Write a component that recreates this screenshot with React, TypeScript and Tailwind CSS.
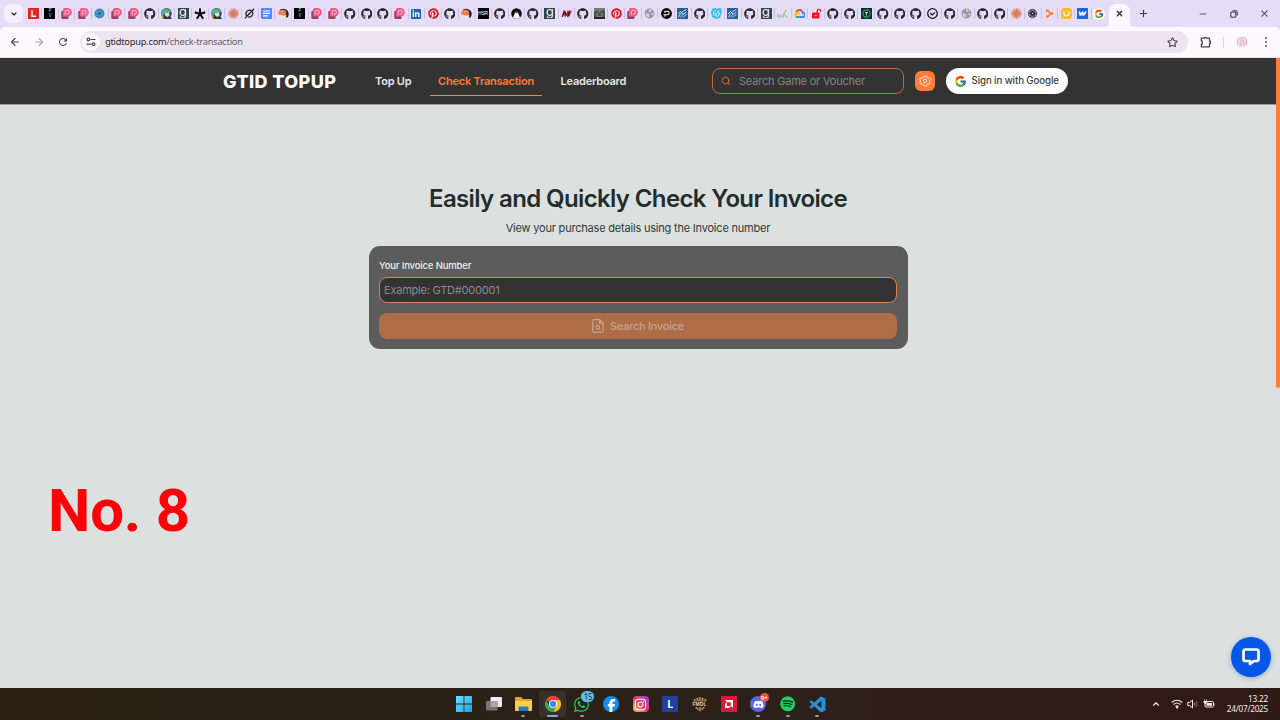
import type { ReactNode } from "react";
import { ChevronDown, ChevronUp, Search, Star, X, Plus, Minus, ArrowLeft, ArrowRight } from "lucide-react";
import {
  FaGithub,
  FaPinterest,
  FaLinkedinIn,
  FaGoodreadsG,
  FaFacebookF,
  FaInstagram,
  FaDiscord,
  FaSpotify,
  FaWhatsapp,
} from "react-icons/fa6";
import { FcGoogle } from "react-icons/fc";
import { BiLogoVisualStudio } from "react-icons/bi";
import { MdRefresh } from "react-icons/md";

function GithubMark() {
  return <FaGithub className="size-[11.500px] text-[#24242c]" />;
}

function PinkP() {
  return (
    <svg viewBox="0 0 11 11" className="size-[11px]">
      <path d="M.3 3.500 3 2v5l5 1.500L7 11H1.300Q.3 11 .3 10Z" fill="#96405f" />
      <path d="M2 1.500Q2 0 3.500 0H6.500a4.300 4.300 0 0 1 0 8.600H2Z" fill="#ee5b88" />
      <path d="M4.200 7.200V4.200a2.100 2 0 1 1 2.100 2H5.800" fill="none" stroke="#fac0d3" strokeWidth="1" />
    </svg>
  );
}

function BlackPV() {
  return (
    <span className="flex size-[11px] flex-col items-center justify-center bg-black font-['Liberation_Mono',monospace] text-[4.500px] leading-[4.500px] text-[#ccc]">
      <span>P</span>
      <span>V</span>
    </span>
  );
}

function BlueKnot() {
  return (
    <svg viewBox="0 0 11 11" className="size-[11px]">
      <circle cx="5.500" cy="5.500" r="5" fill="#3d8cc0" />
      <path d="M2 3.500 9 7M2.500 8l5-5" stroke="#7fbbe0" strokeWidth=".7" fill="none" />
      <circle cx="5.500" cy="5.500" r="1.300" fill="#1f5f92" />
    </svg>
  );
}

function Anime() {
  return (
    <svg viewBox="0 0 11 11" className="size-[11px]">
      <circle cx="5.500" cy="5.300" r="5.200" fill="#27494f" />
      <path d="M0 5Q2 0 6.500 .5L10 3 9 5 6 4 4 4.500 2 8Z" fill="#45b5a5" />
      <path d="M4 4.500h4l.5 3L6 9.200 3.800 7Z" fill="#f5d8c4" />
      <path d="M1 9 4 7.800l3 1.700 2.500-1L11 11H3Z" fill="#32383e" />
      <path d="m0 7 3 1-1.500 3Z" fill="#d99838" />
    </svg>
  );
}

function Goodreads() {
  return (
    <span className="flex size-[11px] items-center justify-center bg-[#34444f]">
      <FaGoodreadsG className="size-[9.500px] stroke-white text-white [stroke-width:22]" />
    </span>
  );
}

function Asterisk() {
  return (
    <svg viewBox="0 0 12 12" className="size-[12px]" stroke="#080808" strokeWidth="2">
      <path d="M6 6V.5M6 6 .8 4.300M6 6l5.200-1.700M6 6l-3.200 4.800M6 6l3.200 4.800" />
    </svg>
  );
}

function Claude() {
  return (
    <svg viewBox="0 0 12 12" className="size-[11px]" stroke="#dc7c5c" strokeWidth="1.150" strokeLinecap="round">
      <path d="M6 .7v10.600M.7 6h10.600M2.300 2.300l7.400 7.400M9.700 2.300 2.300 9.700M4 1l4 10M8 1 4 11M1 4l10 4M11 4 1 8" />
    </svg>
  );
}

function Grok() {
  return (
    <svg viewBox="0 0 12 12" className="size-[11px]" fill="none" stroke="#17151c" strokeWidth="1.250">
      <path d="M8 2.800a4 4 0 0 0-5 6M4.300 9.600a4 4 0 0 0 5-5.400M1 11.300 11 .8M4.600 7.300 9 3" />
    </svg>
  );
}

function Docs() {
  return (
    <svg viewBox="0 0 11 11" className="size-[11px]">
      <rect width="11" height="11" rx="1" fill="#4c8cf0" />
      <path d="M2 3h7M2 5.400h7M2 7.800h5" stroke="#fff" strokeWidth="1.150" />
    </svg>
  );
}

function OrangeFox() {
  return (
    <svg viewBox="0 0 11 11" className="size-[11px]">
      <path d="M2 1.500Q6-.5 9.500 2.500 12 6 9.500 9.500H5Z" fill="#262629" />
      <ellipse cx="4.300" cy="4.900" rx="3.900" ry="3.200" fill="#f27850" />
      <path d="M0 7.500q3-1.500 4.600.2L8.500 7 7.500 10H1.500Z" fill="#f7e2d8" />
      <circle cx="4" cy="3.600" r=".8" fill="#ffc3a4" />
    </svg>
  );
}

function LinkedIn() {
  return (
    <span className="flex size-[10px] items-center justify-center rounded-[1px] bg-[#1667b7]">
      <FaLinkedinIn className="size-[8px] text-white" />
    </span>
  );
}

function Pinterest() {
  return (
    <span className="flex size-[11px] rounded-full bg-white">
      <FaPinterest className="size-[11px] text-[#d5152d]" />
    </span>
  );
}

function Hsr() {
  return (
    <span className="flex size-[11px] items-center justify-center bg-black font-['Liberation_Sans',sans-serif] text-[5px] leading-none tracking-[-0.200px] text-white">
      HSR
    </span>
  );
}

function Hood() {
  return (
    <svg viewBox="0 0 11 11" className="size-[11px]">
      <circle cx="5.500" cy="5.500" r="5.300" fill="#101012" />
      <path d="M5.500 3.500Q3.500 3.500 3.500 6L2 9.500Q5.500 12 9 9.500L7.500 6Q7.500 3.500 5.500 3.500Z" fill="#f8f5fb" />
      <path d="M4 4.500q1.500-2 3 0Q5.500 6 4 4.500" fill="#48484d" />
    </svg>
  );
}

function RedN() {
  return (
    <svg viewBox="0 0 11 11" className="size-[11px]">
      <path d="M.3 9.500 3 1.500l2.200 5L7 1.500l1 3 3-2.500-3 7.500L6 6 4 9.500 3 6Z" fill="#b51224" />
      <path d="M1.500 9 3.600 3 6.500 8.500 9 2.500" fill="none" stroke="#261116" strokeWidth="1" />
    </svg>
  );
}

function Photo() {
  return (
    <svg viewBox="0 0 11 11" className="size-[11px]">
      <path d="M0 0h11v11H0Z" fill="#4c5350" />
      <path d="M0 0h11v3L8 2 5.500 5 3 2 0 4Z" fill="#777d77" />
      <path d="M2.500 5h1.500v3h3V5h1.500v4h-6Z" fill="#7d8079" />
      <path d="M0 9h11v2H0Z" fill="#242927" />
    </svg>
  );
}

function Globe() {
  return (
    <svg viewBox="0 0 11 11" className="size-[11px]">
      <circle cx="5.500" cy="5.500" r="4.900" fill="#9699a0" />
      <path d="M1.500 5.200 4 5.500l1.500 1-.5 1.200v1.800L2 8ZM5 1.200 8 2 7 3.700 5 3.800ZM8 4.500l1.800 1.500-1 1.500-1.500-.8Z" fill="#d5d1dd" />
    </svg>
  );
}

function BlackP() {
  return (
    <svg viewBox="0 0 11 11" className="size-[11px]">
      <circle cx="5.500" cy="5.500" r="5.400" fill="#070709" />
      <path d="M4 8.700V7M4 5V3.200h2.400a1.700 1.700 0 0 1 0 3.500H2.500" fill="none" stroke="#fff" strokeWidth="1.100" />
    </svg>
  );
}

function BlueWing() {
  return (
    <svg viewBox="0 0 11 11" className="size-[11px]">
      <path d="M0 0h11v11H0Z" fill="#265f9d" />
      <path d="M1.500 9.500Q3 4 9.500 1.500M3.500 9.500Q5 6 9.500 4M6 9.500Q7 7.500 9.500 6.500M1 6l3-3M4 4l2 2" stroke="#c3d9ec" strokeWidth="1" fill="none" />
    </svg>
  );
}

function CyanSwirl() {
  return (
    <svg viewBox="0 0 11 11" className="size-[11px]">
      <path d="M2 0 5.500 .5 10 0 11 4 9 10 5.500 11 1 9 0 4Z" fill="#43bae5" />
      <path d="M5 2.500Q2 3 2.500 6q1 2 3 1.500L4.500 5M7.500 2.500 6.500 5h2.200q0 3-3.200 4" stroke="#e8f8ff" strokeWidth=".9" fill="none" />
    </svg>
  );
}

function GreenLine() {
  return (
    <svg viewBox="0 0 11 11" className="size-[11px]" fill="none" stroke="#9bc886" strokeWidth="1.100">
      <path d="M.5 6v3h2V6.500M4 7v2h2.500V6.500l3-5M7 6l2.500 3h1.500" />
    </svg>
  );
}

function CloudMark() {
  return (
    <svg viewBox="0 0 12 12" className="size-[11px]" fill="none" strokeWidth="2.100">
      <path d="M2.400 4.800A3.900 3.900 0 0 1 8.600 3.200" stroke="#ea4335" />
      <path d="M8.200 2.900q1.400 1 1.400 2.500a2.200 2.200 0 0 1 0 4.400H6" stroke="#4285f4" />
      <path d="M6.200 9.800H3.500Q2.700 9.800 2 9.200" stroke="#34a853" />
      <path d="M2.300 9.400A2.300 2.300 0 0 1 3.500 5.400q1.300 0 2.200 1.200" stroke="#fbbc05" />
    </svg>
  );
}

function RedLock() {
  return (
    <svg viewBox="0 0 11 11" className="size-[11px]">
      <path d="M6.200 5V3a1.700 1.700 0 0 1 3.400 0v.7" stroke="#ef1822" strokeWidth="1.300" fill="none" />
      <rect x="1" y="4.600" width="7.500" height="6" rx=".7" fill="#f3121e" />
      <circle cx="4.800" cy="7.500" r=".8" fill="#fbe5ef" />
    </svg>
  );
}

function GreenT() {
  return (
    <svg viewBox="0 0 11 11" className="size-[11px]">
      <path d="M0 0h11v11H0Z" fill="#102c30" />
      <circle cx="5.500" cy="5.500" r="3.600" fill="none" stroke="#2cae5c" strokeWidth="1.100" />
      <path d="M4 4.500h3M5.500 4.500v3" stroke="#d5e5dd" strokeWidth=".9" />
    </svg>
  );
}

function CheckRound() {
  return (
    <svg viewBox="0 0 11 11" className="size-[11px]" fill="none" stroke="#15131a" strokeWidth="1.250">
      <circle cx="5.500" cy="5.500" r="4.800" />
      <path d="m3.200 5 2 1.900 2.800-2.500" />
    </svg>
  );
}

function OpenAi() {
  return (
    <svg viewBox="0 0 12 12" className="size-[11px]" fill="none" stroke="#25222b" strokeWidth=".8">
      <rect x="4" y="1.300" width="4.500" height="6" rx="2" />
      <rect x="4" y="1.300" width="4.500" height="6" rx="2" transform="rotate(60 6 6)" />
      <rect x="4" y="1.300" width="4.500" height="6" rx="2" transform="rotate(120 6 6)" />
      <rect x="4" y="1.300" width="4.500" height="6" rx="2" transform="rotate(180 6 6)" />
      <rect x="4" y="1.300" width="4.500" height="6" rx="2" transform="rotate(240 6 6)" />
      <rect x="4" y="1.300" width="4.500" height="6" rx="2" transform="rotate(300 6 6)" />
    </svg>
  );
}

function OrangeNodes() {
  return (
    <svg viewBox="0 0 11 11" className="size-[11px]" fill="#ff792d">
      <path d="M2 1.500h2.500l1 2 1 .8H9v2.500H6.500l-1 .7-1 2H2V7.300h2L5.300 5.500 4 3.800H2Z" />
    </svg>
  );
}

function YellowSmile() {
  return (
    <svg viewBox="0 0 11 11" className="size-[11px]">
      <rect width="11" height="11" rx="3" fill="#f8bd31" />
      <path d="M3 3.500v1.700a2.500 2.500 0 0 0 5 0V3.500" stroke="#fff8d8" strokeWidth="1.200" fill="none" />
    </svg>
  );
}

function Webflow() {
  return (
    <svg viewBox="0 0 11 11" className="size-[11px]">
      <rect width="11" height="11" rx=".5" fill="#1765e9" />
      <path d="M1.500 3.500h1.800l.4 2 1.400-2h1.300l.3 2 1.200-2H10L7.200 7.700H5.500l-.2-1.500-1.200 1.500H2.600Z" fill="#fff" />
    </svg>
  );
}

const L = () => (
  <span className="flex size-[11px] items-center justify-center bg-[#dc2924]">
    <svg viewBox="0 0 11 11" className="size-[11px]" fill="none" stroke="#fff" strokeWidth="1.400">
      <path d="M4 2.300v6h4" />
    </svg>
  </span>
);
const GoogleTab = () => (
  <span className="flex size-[12px] items-center justify-center rounded-full bg-white">
    <FcGoogle className="size-[10px]" />
  </span>
);

const tabs = [
  L, BlackPV, PinkP, PinkP, BlueKnot, PinkP, PinkP, GithubMark, Anime, Goodreads, Asterisk, Anime, Claude,
  Grok, Docs, OrangeFox, BlackPV, PinkP, PinkP, GithubMark, GithubMark, GithubMark, PinkP, LinkedIn, Pinterest,
  GithubMark, OrangeFox, Hsr, GithubMark, Hood, GithubMark, Goodreads, RedN, GithubMark, Photo, Pinterest, PinkP,
  Globe, BlackP, BlueWing, GithubMark, CyanSwirl, BlueWing, GithubMark, Goodreads, GreenLine, CloudMark, RedLock,
  GithubMark, GithubMark, GreenT, GithubMark, GithubMark, GithubMark, CheckRound, GithubMark, Globe, GithubMark,
  GithubMark, Claude, OpenAi, OrangeNodes, YellowSmile, Webflow, GoogleTab,
];

function TabStrip() {
  return (
    <div className="flex h-[27px] shrink-0 bg-[#e5dcf6]">
      <button className="ml-1 mt-1 flex h-[19px] w-[19px] shrink-0 items-center justify-center rounded-[6px] bg-[#f5effc]">
        <ChevronDown className="size-[8px] text-[#29242f]" strokeWidth={3.5} />
      </button>
      <div className="ml-[2px] flex h-[27px] w-[1083px] shrink-0">
        {tabs.map((Icon, i) => (
          <div key={i} className="relative flex w-[16.660px] shrink-0 items-center justify-center">
            <Icon />
            {i < tabs.length - 1 && <span className="absolute -right-[0.500px] top-2 h-[11px] w-px bg-[#cfbdf0]" />}
          </div>
        ))}
      </div>
      <div className="relative ml-[1px] mt-1 flex w-[21px] items-center justify-center rounded-t-[7px] bg-[#fdf7fe] pb-[4px]">
        <X className="size-[9px] text-[#28232d]" strokeWidth={3.2} />
        <svg viewBox="0 0 4 4" className="absolute -left-1 bottom-0 size-1" fill="#fdf7fe"><path d="M4 0v4H0q4 0 4-4" /></svg>
        <svg viewBox="0 0 4 4" className="absolute -right-1 bottom-0 size-1" fill="#fdf7fe"><path d="M0 0v4h4Q0 4 0 0" /></svg>
      </div>
      <div className="flex flex-1 items-center text-[#3f3a46]">
        <Plus className="ml-[8px] size-[11px]" strokeWidth={2.400} />
        <Minus className="ml-[49px] size-[10px]" strokeWidth={2} />
        <svg viewBox="0 0 8 8" className="ml-[22px] size-[8px]" fill="none" stroke="currentColor" strokeWidth="1.100">
          <rect x=".8" y="2" width="5" height="5.200" rx="1" />
          <path d="M2.500.7h3.200q1.500 0 1.500 1.500V5.500" />
        </svg>
        <X className="ml-[21px] size-[11px]" strokeWidth={2.200} />
      </div>
    </div>
  );
}

function AddressBar() {
  return (
    <div className="h-[31px] shrink-0 bg-[#e5dcf6]">
      <div className="flex h-[31px] items-center rounded-t-[5px] border-b border-[#e8e1ed] bg-[#fdf7fe] text-[#49434f]">
        <ArrowLeft className="ml-[9px] size-[12px]" strokeWidth={2.300} />
        <ArrowRight className="ml-[12px] size-[12px] text-[#aaa2b0]" strokeWidth={2.200} />
        <MdRefresh className="ml-[12px] size-[12px]" />
        <div className="ml-[11px] flex h-[22px] w-[1108px] shrink-0 items-center rounded-full bg-[#ece5f1]">
          <span className="ml-[2px] flex size-[18px] items-center justify-center rounded-full bg-[#fdf7fe]">
            <svg viewBox="0 0 10 10" className="size-[10px]" fill="none" stroke="currentColor" strokeWidth="1.200">
              <circle cx="2.400" cy="2.500" r="1.300" />
              <circle cx="7.600" cy="7.200" r="1.300" />
              <path d="M4.500 2.500H9.500M.5 7.200h5" />
            </svg>
          </span>
          <span className="ml-[5px] whitespace-nowrap font-['Noto_Sans',sans-serif] text-[9.300px] leading-none tracking-[-0.240px] text-[#29242f]">
            gtidtopup.com<span className="text-[#625b68]">/check-transaction</span>
          </span>
          <Star className="ml-auto mr-[10px] size-[11px]" strokeWidth={2.400} />
        </div>
        <svg viewBox="0 0 12 12" className="ml-[12px] size-[12px]" fill="none" stroke="currentColor" strokeWidth="1.250">
          <path d="M1.300 2.200h3V1.500h2.200v.7h3v3h1v2h-1v3.600H1.300V8.200h1V5h-1Z" strokeLinejoin="round" />
        </svg>
        <span className="ml-[11px] h-[11px] w-px bg-[#dfd5e9]" />
        <svg viewBox="0 0 12 12" className="ml-[12px] size-[12px]">
          <circle cx="6" cy="6" r="5.700" fill="#f3e1e7" />
          <path d="M1.500 9V4.500Q3 .8 6 2q4-1.500 4.500 3v4M4.500 10 4 5.500 6 3.600l2 1.700-.3 4M5.500 6.500h2" fill="none" stroke="#dba3b3" strokeWidth=".8" />
        </svg>
        <svg viewBox="0 0 4 12" className="ml-[16px] h-[12px] w-[4px]" fill="currentColor">
          <circle cx="2" cy="2" r=".9" /><circle cx="2" cy="6" r=".9" /><circle cx="2" cy="10" r=".9" />
        </svg>
      </div>
    </div>
  );
}

function SiteHeader() {
  return (
    <header className="flex h-[47px] items-center border-b border-[#979b99] bg-[#333] pl-[223px] text-[11px] font-semibold text-[#e7e7e7]">
      <div className="w-[144px] whitespace-nowrap pt-[2px] text-[18px] font-extrabold leading-none tracking-[0.400px] text-white">GTID TOPUP</div>
      <nav className="flex w-[345px] items-center whitespace-nowrap tracking-[-0.220px]">
        <a className="w-[52px] pl-2 pt-px">Top Up</a>
        <a className="ml-[11px] flex h-[30px] w-[112px] items-center justify-center border-b border-[#ff8137] pt-[2px] text-[#ff7c36]">
          Check Transaction
        </a>
        <a className="ml-[10.500px] px-2 pt-px">Leaderboard</a>
      </nav>
      <div className="flex h-[26px] w-[192px] shrink-0 items-center rounded-[8px] border border-[#c16a3b] pl-[8px]">
        <Search className="size-[10px] text-[#d97642]" strokeWidth={2} />
        <span className="ml-[8px] whitespace-nowrap pt-px text-[11px] font-normal tracking-[-0.200px] text-[#858585]">Search Game or Voucher</span>
      </div>
      <button className="ml-[11px] flex size-[20px] shrink-0 items-center justify-center rounded-[6px] bg-[#ff7d36]">
        <svg viewBox="0 0 24 24" className="size-[12px]" fill="none" stroke="#ffe3d3" strokeWidth="2">
          <path d="m9.500 2-.7 3-2.200 1.200-3-.9L1.200 9.500 3.400 12l-2.200 2.500 2.400 4.200 3-.9L8.800 19l.7 3h5l.7-3 2.200-1.200 3 .9 2.400-4.200-2.200-2.500 2.200-2.500-2.400-4.200-3 .9L15.200 5l-.7-3Z" strokeLinejoin="round" />
          <circle cx="12" cy="12" r="3.500" />
        </svg>
      </button>
      <button className="ml-[11px] flex h-[26px] w-[122px] shrink-0 items-center rounded-full bg-white pl-2">
        <FcGoogle className="size-[13px]" />
        <span className="ml-[4.500px] whitespace-nowrap pt-px text-[9.700px] font-medium tracking-[-0.100px] text-[#3c4043]">Sign in with Google</span>
      </button>
    </header>
  );
}

function InvoiceIcon() {
  return (
    <svg viewBox="0 0 12 14" className="h-[14px] w-[12px]" fill="none" stroke="currentColor" strokeWidth="1.200">
      <path d="M7.500.7H2Q.8.700.8 1.900v10.200q0 1.200 1.200 1.200h8q1.200 0 1.200-1.200V4.300ZM7.500.7v3.600h3.700" />
      <circle cx="5.800" cy="8.300" r="1.800" />
      <path d="m7.100 9.600 1.300 1.300" />
    </svg>
  );
}

function InvoicePanel() {
  return (
    <main className="flex flex-col items-center pt-[79px]">
      <h1 className="whitespace-nowrap text-[24px] font-semibold leading-[30px] tracking-[-0.630px] text-[#222d2c]">
        Easily and Quickly Check Your Invoice
      </h1>
      <p className="mt-[6px] whitespace-nowrap text-[11px] leading-[16px] tracking-[-0.200px] text-[#2e3938]">
        View your purchase details using the Invoice number
      </p>
      <section className="mt-[10px] h-[103px] w-[539px] rounded-[11px] bg-[#5c5c5c] px-[10.500px] pt-[12px]">
        <label className="block pt-px text-[9.500px] font-medium leading-[14px] tracking-[-0.150px] text-[#eee]">Your Invoice Number</label>
        <div className="mt-[4px] flex h-[26px] items-center rounded-[8px] border border-[#e0824f] bg-[#333] px-1 text-[11px] tracking-[-0.220px] text-[#8c8c8c]">
          Example: GTD#000001
        </div>
        <button className="mt-[10px] flex h-[26px] w-full items-center justify-center gap-[6px] rounded-[8px] bg-[#ae6d46] text-[11px] font-medium tracking-[-0.270px] text-[#bfa596]">
          <InvoiceIcon />
          Search Invoice
        </button>
      </section>
    </main>
  );
}

function TaskItem({ children, running, active }: { children: ReactNode; running?: boolean; active?: boolean }) {
  return (
    <div className="flex w-[29.400px] shrink-0 justify-center">
      <div className={active ? "relative mt-[3px] flex h-[26px] w-[27px] items-center justify-center rounded-[3px] bg-[#3a302b]" : "relative mt-[3px] flex h-[26px] w-[27px] items-center justify-center"}>
        {children}
        {active && <span className="absolute bottom-0 h-[2px] w-[11px] rounded-full bg-[#70b7e0]" />}
        {running && <span className="absolute bottom-0 h-[2px] w-[4px] rounded-full bg-[#9c9492]" />}
      </div>
    </div>
  );
}

function ChromeIcon() {
  return (
    <svg viewBox="0 0 48 48" className="size-[16px]">
      <path d="M24 24 3.200 12A24 24 0 0 1 44.800 12H24Z" fill="#ea4335" />
      <path d="M44.800 12A24 24 0 0 1 24 48l10.400-18L24 12Z" fill="#fbc116" />
      <path d="M3.200 12A24 24 0 0 0 24 48l10.400-18H13.600Z" fill="#34a853" />
      <circle cx="24" cy="24" r="12" fill="#fff" />
      <circle cx="24" cy="24" r="9.500" fill="#4285f4" />
    </svg>
  );
}

function Taskbar() {
  return (
    <footer className="flex h-[32px] shrink-0 bg-linear-to-r from-[#2b2013] via-[#2c2119] via-60% to-[#301a16] pl-[449.700px] font-['Noto_Sans',sans-serif]">
      <TaskItem>
        <svg viewBox="0 0 16 16" className="size-[16px]">
          <defs><linearGradient id="win" x2="1" y2="1"><stop stopColor="#70dcff" /><stop offset="1" stopColor="#17a5ed" /></linearGradient></defs>
          <path d="M0 0h7.600v7.600H0ZM8.400 0H16v7.600H8.400ZM0 8.400h7.600V16H0ZM8.400 8.400H16V16H8.400Z" fill="url(#win)" />
        </svg>
      </TaskItem>
      <TaskItem>
        <svg viewBox="0 0 16 16" className="size-[16px]">
          <rect x="4.500" y="1" width="11.500" height="10" rx="1" fill="#efeeed" />
          <rect x="0" y="5" width="11.500" height="9.500" rx="1" fill="#797674" />
          <path d="M4.500 5h7v6h-7Z" fill="#a8a6a4" />
        </svg>
      </TaskItem>
      <TaskItem running>
        <svg viewBox="0 0 17 16" className="h-[16px] w-[17px]">
          <path d="M0 2q0-1 1-1h5l2 2h8q1 0 1 1v10H0Z" fill="#e0a32c" />
          <path d="M0 5h17v9q0 1-1 1H1q-1 0-1-1Z" fill="#ffcf4a" />
          <path d="M3.500 15v-3.500q0-1 1-1h8q1 0 1 1V15Z" fill="#1f80ca" />
        </svg>
      </TaskItem>
      <TaskItem active><ChromeIcon /></TaskItem>
      <TaskItem running>
        <FaWhatsapp className="size-[17px] text-[#25c95f]" />
        <span className="absolute left-[13px] top-0 flex h-[11px] w-[13px] items-center justify-center rounded-full bg-[#64bce9] text-[8px] leading-none tracking-[-0.400px] text-[#173344]">15</span>
      </TaskItem>
      <TaskItem>
        <span className="flex size-[16px] items-end justify-center overflow-hidden rounded-full bg-[#168bea]"><FaFacebookF className="size-[13px] text-white" /></span>
      </TaskItem>
      <TaskItem>
        <span className="flex size-[16px] items-center justify-center rounded-[4px] bg-linear-to-tr from-[#ffc14d] via-[#ed3267] to-[#8d35d6]"><FaInstagram className="size-[13px] text-white" /></span>
      </TaskItem>
      <TaskItem>
        <span className="flex size-[16px] items-center justify-center bg-[#21409c] text-[10.500px] font-bold leading-none text-white">L</span>
      </TaskItem>
      <TaskItem>
        <span className="relative flex size-[16px] items-center justify-center">
          <svg viewBox="0 0 16 16" className="absolute size-[16px]">
            <path d="M1 7Q1 1 8 1t7 6l-2 5-5 4-5-4Z" fill="#684a31" />
            <path d="M3 5 2 3M6 5 5 2M8 5V1M10 5l1-3M13 5l1-2M4 11l2 3M8 11v4M12 11l-2 3" stroke="#c6a071" strokeWidth="1" />
            <path d="M1 6h14v5H1Z" fill="#241b16" />
          </svg>
          <span className="relative font-['Liberation_Sans',sans-serif] text-[5px] font-bold leading-none text-[#e5d5bd]">FMDL</span>
        </span>
      </TaskItem>
      <TaskItem>
        <svg viewBox="0 0 16 16" className="size-[16px]">
          <path d="M0 0h16v16H0Z" fill="#dc1839" />
          <path d="M4 4h8v8L9.700 9.700V6.300H6.300ZM4 8l1.900-1.900v4h4L8 12H4Z" fill="#fff" />
        </svg>
      </TaskItem>
      <TaskItem running>
        <span className="flex size-[16px] items-center justify-center rounded-full bg-[#5966e8]"><FaDiscord className="size-[11px] text-white" /></span>
        <span className="absolute left-[15px] top-[2px] flex h-[9px] w-[9px] items-center justify-center rounded-full bg-[#ef5350] text-[6px] font-semibold leading-none text-white">9+</span>
      </TaskItem>
      <TaskItem running><FaSpotify className="size-[15.500px] rounded-full bg-[#17241a] text-[#24cf60]" /></TaskItem>
      <TaskItem running><BiLogoVisualStudio className="size-[19px] text-[#2491db]" /></TaskItem>
      <div className="ml-auto mr-[12px] flex items-center text-[#f6efed]">
        <ChevronUp className="size-[10px]" strokeWidth={2.600} />
        <svg viewBox="0 0 12 10" className="ml-[10px] h-[10px] w-[12px]" fill="none" stroke="currentColor" strokeWidth="1.100">
          <path d="M.8 3.500q5.200-4.600 10.400 0M2.600 5.500q3.400-3 6.800 0M4.400 7.400q1.600-1.400 3.200 0" />
          <circle cx="6" cy="8.500" r=".6" fill="currentColor" />
        </svg>
        <svg viewBox="0 0 12 10" className="ml-[4px] h-[10px] w-[12px]" fill="none" stroke="currentColor" strokeWidth="1">
          <path d="M.7 3.500h2L5.500 1v8L2.700 6.500h-2Z" /><path d="M7.300 3.500q1 1.500 0 3" opacity=".6" /><path d="M9 2q2 3 0 6" opacity=".35" />
        </svg>
        <svg viewBox="0 0 12 10" className="ml-[4px] h-[10px] w-[12px]">
          <rect x="2" y="2.500" width="8.500" height="5.500" rx="1.200" fill="none" stroke="currentColor" />
          <path d="M4 4h5v2.700H3Z" fill="currentColor" /><path d="M11 4v3M1.500.5v2M3.500.5v2M.7 2.500h3.600q0 2-1.800 2T.7 2.500" stroke="currentColor" fill="currentColor" strokeWidth=".7" />
        </svg>
        <div className="w-[53px] whitespace-nowrap text-right text-[8.200px] leading-[10.500px]">
          <div className="tracking-[-0.200px]">13.22</div>
          <div className="tracking-[-0.240px]">24/07/2025</div>
        </div>
      </div>
    </footer>
  );
}

export default function App() {
  return (
    <div className="flex h-[720px] w-[1280px] flex-col overflow-hidden bg-[#e5dcf6]">
      <TabStrip />
      <AddressBar />
      <div className="relative flex h-[630px] shrink-0 bg-[#dce1df] font-['Inter',sans-serif]">
        <div className="w-[1276px]">
          <SiteHeader />
          <InvoicePanel />
        </div>
        <div className="h-[330px] w-1 rounded-b-[2px] bg-[#ff7e37]" />
        <div className="absolute left-[48px] top-[417px] whitespace-nowrap text-[60px] font-bold leading-[72px] tracking-[-0.200px] text-[#ff0008] font-['Roboto',sans-serif]">No. 8</div>
        <button className="absolute left-[1231px] top-[579px] flex size-[40px] items-center justify-center rounded-full bg-[#0558e6] shadow-[0_1px_5px_#8ba7cf]">
          <svg viewBox="0 0 20 20" className="size-[20px]" fill="none" stroke="#fff" strokeWidth="2.700" strokeLinejoin="round">
            <path d="M4.500 2.500h11q2 0 2 2v7.500q0 2-2 2H13l-4 3v-3H4.500q-2 0-2-2V4.500q0-2 2-2Z" />
          </svg>
        </button>
      </div>
      <Taskbar />
    </div>
  );
}
